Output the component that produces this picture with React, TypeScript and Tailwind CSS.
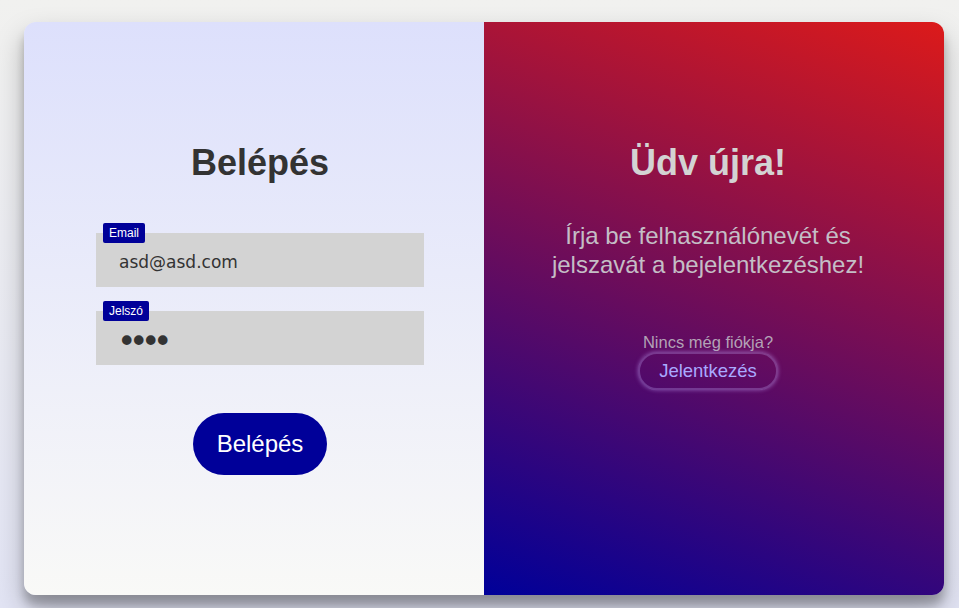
import React from "react"

const sans = "font-['Liberation_Sans',Arial,sans-serif]"

function Field({ label, type, value }: { label: string; type: string; value: string }) {
    const isPassword = type === "password"
    return (
        <div className="relative w-[328px] h-[54px]">
            <span className={`absolute -top-[10px] left-[7px] z-10 rounded-[2px] bg-[#000099] px-[6px] h-[20px] leading-[20px] text-[12px] text-white ${sans}`}>
                {label}
            </span>
            <input
                type={type}
                defaultValue={value}
                readOnly
                className={
                    isPassword
                        ? "block w-full h-full bg-[#d3d3d3] pl-[21px] pr-3 pt-[7px] text-[33px] tracking-[-7.5px] text-[#333] font-['DejaVu_Sans',Tahoma,sans-serif] outline-none"
                        : "block w-full h-full bg-[#d3d3d3] pl-[23px] pr-3 pt-[3px] text-[17px] text-[#333] font-['DejaVu_Sans',Tahoma,sans-serif] outline-none"
                }
            />
        </div>
    )
}

export default function App() {
    return (
        <div className="min-h-[608px] w-full bg-gradient-to-b from-[#f1f1ef] to-[#e2e4f4] pt-[22px] px-[24px] pb-[13px]">
            <div className="flex w-[920px] h-[573px] rounded-[12px] overflow-hidden shadow-[0_14px_28px_rgba(0,0,0,0.25),0_10px_10px_rgba(0,0,0,0.22)]">
                {/* Bal oldal: belépés */}
                <div className="w-[460px] bg-gradient-to-b from-[#dde0fc] to-[#f9f9f7] flex flex-col items-center pt-[123px] pl-[12px]">
                    <h1 className={`text-[36px] leading-none font-bold text-[#333] ${sans}`}>Belépés</h1>
                    <div className="mt-[52px] flex flex-col gap-[24px]">
                        <Field label="Email" type="text" value="asd@asd.com" />
                        <Field label="Jelszó" type="password" value="asdf" />
                    </div>
                    <button className={`mt-[48px] h-[62px] px-[24px] rounded-full bg-[#000099] text-white text-[24px] ${sans}`}>
                        Belépés
                    </button>
                </div>

                {/* Jobb oldal: üdvözlés */}
                <div className="w-[460px] bg-[linear-gradient(200deg,#dc1a1a,#000099)] flex flex-col items-center pt-[123px] pr-[12px]">
                    <h1 className={`text-[36px] leading-none font-bold text-[#d3d3d3] ${sans}`}>Üdv újra!</h1>
                    <p className={`mt-[40px] text-center text-[24px] leading-[29px] text-[#c4bec6] ${sans}`}>
                        Írja be felhasználónevét és
                        <br />
                        jelszavát a bejelentkezéshez!
                    </p>
                    <p className={`mt-[54px] text-[16.5px] leading-[18px] text-[#b3a2b6] ${sans}`}>Nincs még fiókja?</p>
                    <button className={`mt-px h-[38px] px-[19px] rounded-full border-2 border-[rgba(200,180,255,0.28)] shadow-[0_0_4px_rgba(200,170,255,0.5)] text-[18.5px] text-[#a9a9ff] ${sans}`}>
                        Jelentkezés
                    </button>
                </div>
            </div>
        </div>
    )
}
